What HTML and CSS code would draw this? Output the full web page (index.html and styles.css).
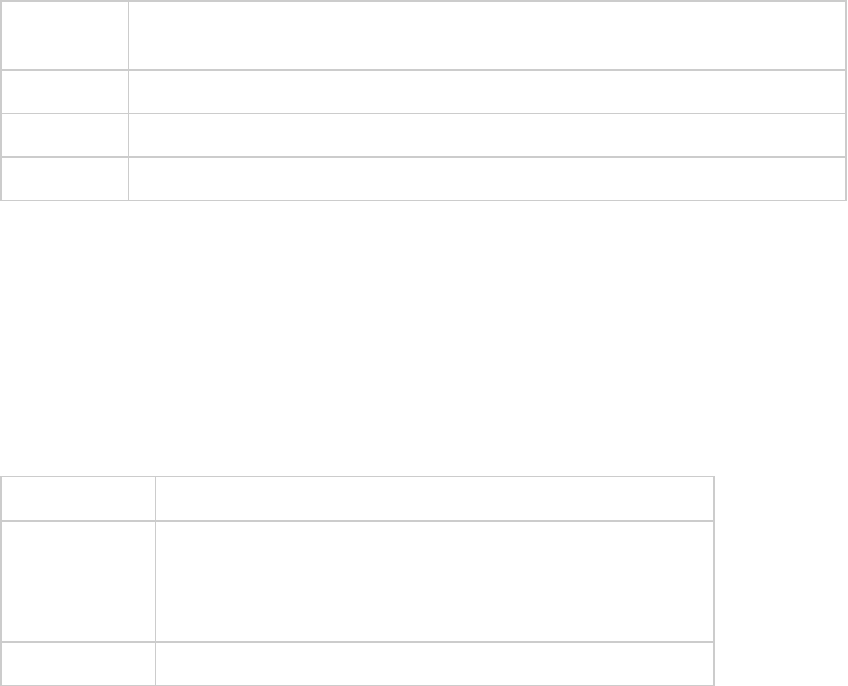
FILE: index.html
```html
<!DOCTYPE html>
<html>
<head>
<meta charset="utf-8">
<link rel="stylesheet" href="styles.css">
</head>
<body>
<div class="page">
  <table class="grid grid-top">
    <tr class="r-tall"><td class="c-first"></td><td></td></tr>
    <tr class="r-short"><td class="c-first"></td><td></td></tr>
    <tr class="r-short r-thick"><td class="c-first"></td><td></td></tr>
    <tr class="r-short"><td class="c-first"></td><td></td></tr>
  </table>
  <table class="grid grid-bottom">
    <tr class="r-head"><td class="c-first2"></td><td></td></tr>
    <tr class="r-body"><td class="c-first2"></td><td></td></tr>
    <tr class="r-foot"><td class="c-first2"></td><td></td></tr>
  </table>
</div>
</body>
</html>
```

FILE: styles.css
```css
html, body {
  margin: 0;
  padding: 0;
  background: #ffffff;
  font-family: "Liberation Sans", Arial, sans-serif;
}
.page {
  display: flex;
  flex-direction: column;
  align-items: flex-start;
  gap: 275px;
}
.grid {
  border-collapse: collapse;
  border-spacing: 0;
}
.grid td {
  border: 1px solid #cccccc;
  padding: 0;
}
.grid-top {
  width: 847px;
  border-top: 2px solid #cccccc;
  border-left: 2px solid #cccccc;
  border-right: 2px solid #cccccc;
}
.grid-top .r-tall td {
  height: 67px;
  border-bottom: 2px solid #cccccc;
}
.grid-top .r-short td {
  height: 42px;
}
.grid-top .r-thick td {
  border-bottom: 2px solid #cccccc;
}
.c-first {
  width: 126px;
}
.grid-bottom {
  width: 715px;
  border-left: 2px solid #cccccc;
  border-right: 2px solid #cccccc;
}
.c-first2 {
  width: 153px;
}
.grid-bottom .r-head td {
  height: 43px;
  border-bottom: 2px solid #cccccc;
}
.grid-bottom .r-body td {
  height: 119px;
  border-bottom: 2px solid #cccccc;
}
.grid-bottom .r-foot td {
  height: 42px;
}
```
